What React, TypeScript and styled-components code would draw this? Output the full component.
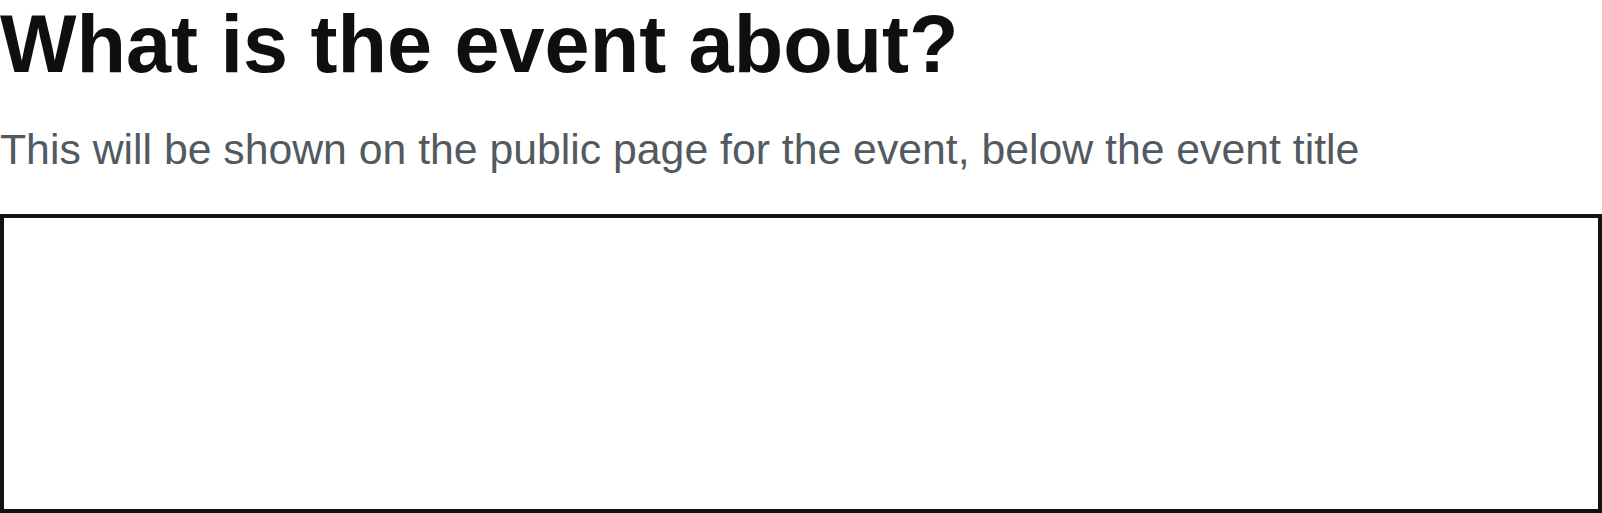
import styled, { createGlobalStyle } from 'styled-components';

const GlobalStyle = createGlobalStyle`
  html, body {
    margin: 0;
    padding: 0;
    background: #ffffff;
  }

  body {
    font-family: 'Liberation Sans', Arial, sans-serif;
  }
`;

const Page = styled.main`
  display: flex;
  flex-direction: column;
  width: 100%;
`;

const Title = styled.h1`
  margin: 0;
  color: #0e100f;
  font-size: 81px;
  font-weight: 700;
  line-height: 1.1;
`;

const Hint = styled.p`
  margin: 35.5px 0 0;
  color: #525a61;
  font-size: 42.75px;
  line-height: normal;
`;

const DescriptionField = styled.textarea`
  display: block;
  box-sizing: border-box;
  width: 100%;
  height: 299px;
  margin-top: 40px;
  border: 4.25px solid #111312;
  border-radius: 0;
  background: #ffffff;
  padding: 12px;
  font-family: inherit;
  font-size: 28px;
  resize: none;
  outline: none;
`;

const App = () => {
  return (
    <>
      <GlobalStyle />
      <Page>
        <Title>What is the event about?</Title>
        <Hint>This will be shown on the public page for the event, below the event title</Hint>
        <DescriptionField aria-label="Event description" />
      </Page>
    </>
  );
};

export default App;
